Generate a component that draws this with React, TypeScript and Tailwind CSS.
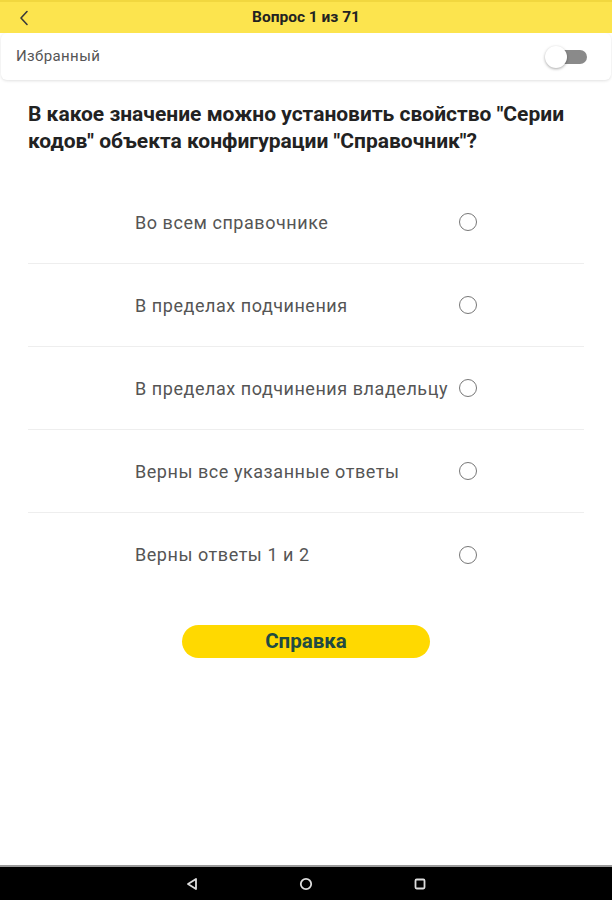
import { useState } from "react";

const answers = [
  "Во всем справочнике",
  "В пределах подчинения",
  "В пределах подчинения владельцу",
  "Верны все указанные ответы",
  "Верны ответы 1 и 2",
];

export default function App() {
  const [favorite, setFavorite] = useState(false);
  const [selected, setSelected] = useState<number | null>(null);

  return (
    <div
      className="w-[612px] h-[900px] flex flex-col bg-white overflow-hidden"
      style={{ fontFamily: "Roboto, 'Noto Sans', sans-serif" }}
    >
      {/* Header */}
      <div className="h-[33px] shrink-0 bg-[#fce44e] border-t-2 border-[#f1d73f] flex items-center relative">
        <button className="w-[48px] h-full flex items-center justify-center text-[#333]">
          <svg width="10" height="16" viewBox="0 0 10 16" fill="none">
            <path d="M8 1.5L2 8l6 6.5" stroke="#3a3a3a" strokeWidth="1.6" strokeLinecap="round" strokeLinejoin="round" />
          </svg>
        </button>
        <div className="absolute left-0 right-0 text-center pointer-events-none text-[15.5px] font-bold text-[#222]">
          Вопрос 1 из 71
        </div>
      </div>

      {/* Favorite card */}
      <div className="h-[47px] shrink-0 mx-[1px] rounded-[6px] bg-white shadow-[0_1px_3px_rgba(0,0,0,0.12)] flex items-center justify-between pl-[15px] pr-[24px]">
        <span className="text-[15px] tracking-[0.4px] text-[#555]">Избранный</span>
        <button onClick={() => setFavorite(!favorite)} className="relative w-[42px] h-[22px] flex items-center">
          <span className={`absolute left-[8px] w-[34px] h-[14px] rounded-full ${favorite ? "bg-[#f5d23a]" : "bg-[#8a8a8a]"}`} />
          <span
            className={`absolute w-[22px] h-[22px] rounded-full bg-white shadow-[0_1px_3px_rgba(0,0,0,0.35)] ${favorite ? "left-[20px]" : "left-0"}`}
          />
        </button>
      </div>

      {/* Question */}
      <div className="px-[28px] pt-[21px] text-[21px] leading-[27px] font-bold text-[#222]">
        В какое значение можно установить свойство "Серии кодов" объекта конфигурации "Справочник"?
      </div>

      {/* Answers */}
      <div className="mx-[28px] mt-[26px] flex flex-col">
        {answers.map((a, i) => (
          <div
            key={i}
            onClick={() => setSelected(i)}
            className={`h-[83px] flex items-center justify-center cursor-pointer ${i < answers.length - 1 ? "border-b border-[#eeeeee]" : ""}`}
          >
            <div className="w-[342px] flex items-center justify-between">
              <span className="text-[18px] tracking-[0.55px] text-[#555]">{a}</span>
              <span className="w-[18px] h-[18px] rounded-full border-[1.5px] border-[#777] flex items-center justify-center">
                {selected === i && <span className="w-[9px] h-[9px] rounded-full bg-[#777]" />}
              </span>
            </div>
          </div>
        ))}
      </div>

      {/* Help button */}
      <div className="flex justify-center mt-[29px]">
        <button className="w-[248px] h-[33px] rounded-full bg-[#ffd900] text-[20.5px] font-bold text-[#214a43]">
          Справка
        </button>
      </div>

      <div className="flex-1" />

      {/* Android nav bar */}
      <div className="h-[35px] shrink-0 bg-black border-t-2 border-[#9a9a9a] flex items-center justify-center gap-[100px]">
        <svg width="14" height="14" viewBox="0 0 14 14" fill="none">
          <path d="M11 2L3 7l8 5z" stroke="#ddd" strokeWidth="1.8" strokeLinejoin="round" />
        </svg>
        <svg width="14" height="14" viewBox="0 0 14 14" fill="none">
          <circle cx="7" cy="7" r="5.2" stroke="#ddd" strokeWidth="1.8" />
        </svg>
        <svg width="14" height="14" viewBox="0 0 14 14" fill="none">
          <rect x="2.5" y="2.5" width="9" height="9" rx="1.2" stroke="#ddd" strokeWidth="1.8" />
        </svg>
      </div>
    </div>
  );
}
